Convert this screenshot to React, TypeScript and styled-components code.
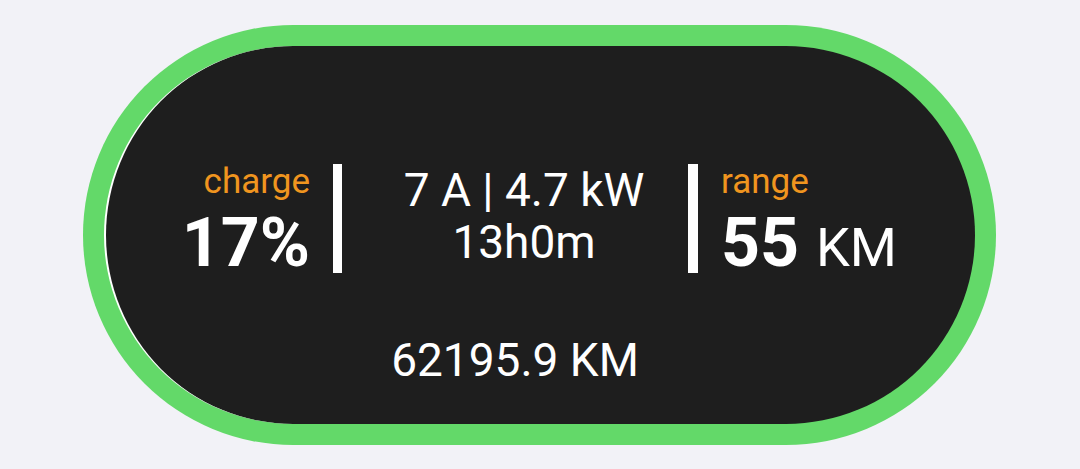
import React from "react";
import styled, { createGlobalStyle } from "styled-components";

const Global = createGlobalStyle`
  html, body { margin: 0; padding: 0; background: #f2f2f7; }
  body { font-family: Roboto, "Liberation Sans", sans-serif; }
`;

const Page = styled.div`
  width: 1080px;
  height: 469px;
  padding: 25px 0 0 83px;
  box-sizing: border-box;
`;

const Ring = styled.div`
  width: 913px;
  height: 420px;
  box-sizing: border-box;
  padding: 21px;
  border-radius: 210px;
  background: #63d969;
`;

const Panel = styled.div`
  height: 100%;
  box-sizing: border-box;
  border-radius: 189px;
  background: #1e1e1e;
  border-left: 2px solid #ffffff;
  padding: 118px 0 0 44px;
  color: #ffffff;
`;

const Grid = styled.div`
  display: grid;
  grid-template-columns: 183px 9px 346px 10px 1fr;
  grid-template-rows: 109px 52px;
  row-gap: 61px;
`;

const Side = styled.div<{ $align: "left" | "right" }>`
  display: flex;
  flex-direction: column;
  align-items: ${(p) => (p.$align === "right" ? "flex-end" : "flex-start")};
  padding-top: 1px;
  padding-right: ${(p) => (p.$align === "right" ? "23px" : "0")};
  padding-left: ${(p) => (p.$align === "left" ? "23px" : "0")};
`;

const Label = styled.div`
  font-size: 35px;
  line-height: 34px;
  color: #f0951f;
`;

const Big = styled.div`
  margin-top: 14px;
  font-size: 68px;
  line-height: 60px;
  font-weight: 700;
  white-space: nowrap;
`;

const Unit = styled.span`
  font-size: 54px;
  font-weight: 400;
`;

const Bar = styled.div`
  background: #ffffff;
  height: 109px;
`;

const Center = styled.div`
  padding-left: 18px;
  text-align: center;
  font-size: 46px;
  line-height: 52px;
  white-space: nowrap;
`;

const Odometer = styled.div`
  grid-column: 3;
  grid-row: 2;
  text-align: center;
  font-size: 46px;
  line-height: 52px;
  white-space: nowrap;
`;

export default function App() {
  return (
    <>
      <Global />
      <Page>
        <Ring>
          <Panel>
            <Grid>
              <Side $align="right">
                <Label>charge</Label>
                <Big>17%</Big>
              </Side>
              <Bar />
              <Center>
                <div>7 A | 4.7 kW</div>
                <div>13h0m</div>
              </Center>
              <Bar />
              <Side $align="left">
                <Label>range</Label>
                <Big>
                  55 <Unit>KM</Unit>
                </Big>
              </Side>
              <Odometer>62195.9 KM</Odometer>
            </Grid>
          </Panel>
        </Ring>
      </Page>
    </>
  );
}
